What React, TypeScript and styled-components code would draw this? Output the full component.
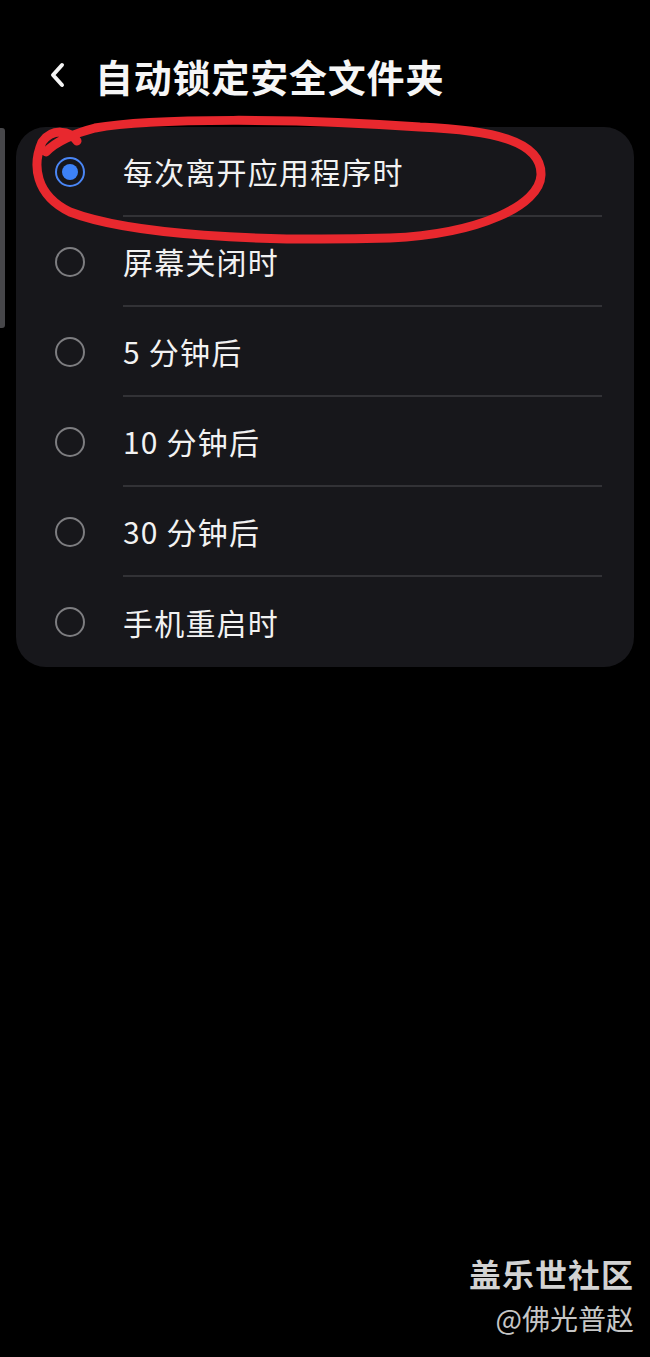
import React from 'react'
import styled, { createGlobalStyle } from 'styled-components'

const GlobalStyle = createGlobalStyle`
    html, body {
        margin: 0;
        padding: 0;
        background: #000;
    }
    body {
        font-family: 'Noto Sans CJK SC', 'Noto Sans', Roboto, sans-serif;
        color: #f4f4f4;
    }
`

const Page = styled.div`
    position: relative;
    width: 650px;
    min-height: 1357px;
    background: #000;
    overflow: hidden;
`

const Header = styled.div`
    display: flex;
    align-items: center;
    height: 54px;
    padding: 48px 0 0 44px;
    margin-bottom: 25px;
`

const BackButton = styled.button`
    background: transparent;
    border: none;
    padding: 0;
    width: 26px;
    height: 30px;
    display: flex;
    align-items: center;
    justify-content: center;
    margin-right: 25px;
`

const Title = styled.h1`
    margin: 0;
    font-size: 38px;
    font-weight: 600;
    letter-spacing: 0.8px;
    color: #f6f6f6;
`

const Card = styled.div`
    margin: 0 16px;
    background: #17171b;
    border-radius: 30px;
    overflow: hidden;
`

const Row = styled.div`
    display: flex;
    align-items: center;
    height: 90px;
    padding-left: 39px;
`

const Radio = styled.span<{ checked?: boolean }>`
    position: relative;
    flex: none;
    box-sizing: border-box;
    width: 30px;
    height: 30px;
    border-radius: 50%;
    border: 2px solid ${({ checked }) => (checked ? '#4a86f5' : '#7d7d80')};
    margin-right: 38px;

    &::after {
        content: '';
        display: ${({ checked }) => (checked ? 'block' : 'none')};
        position: absolute;
        inset: 5px;
        border-radius: 50%;
        background: #3d82f7;
    }
`

const Label = styled.div<{ last?: boolean }>`
    flex: 1;
    height: 100%;
    display: flex;
    align-items: center;
    margin-right: 32px;
    box-sizing: border-box;
    border-bottom: ${({ last }) => (last ? 'none' : '2px solid #323236')};
    font-size: 30px;
    letter-spacing: 1.2px;
    color: #f2f2f2;
`

const ScrollHint = styled.div`
    position: absolute;
    left: 0;
    top: 128px;
    width: 5px;
    height: 200px;
    background: #47474a;
    border-radius: 0 3px 3px 0;
`

const Scribble = styled.svg`
    position: absolute;
    left: 0;
    top: 0;
    pointer-events: none;
`

const Watermark = styled.div`
    position: absolute;
    right: 16px;
    top: 1250px;
    display: flex;
    flex-direction: column;
    align-items: flex-end;
    gap: 2px;
    color: #d2d2d2;
`

const WatermarkBrand = styled.div`
    font-size: 32px;
    font-weight: 700;
    letter-spacing: 1px;
`

const WatermarkUser = styled.div`
    font-size: 28px;
    color: #c6c6c6;
`

const options = [
    '每次离开应用程序时',
    '屏幕关闭时',
    '5 分钟后',
    '10 分钟后',
    '30 分钟后',
    '手机重启时',
]

export default function App() {
    const selected = 0
    return (
        <Page>
            <GlobalStyle />
            <Header>
                <BackButton aria-label="返回">
                    <svg width="18" height="28" viewBox="0 0 18 28">
                        <path
                            d="M14 4 L5 14 L14 24"
                            fill="none"
                            stroke="#f4f4f4"
                            strokeWidth="4"
                            strokeLinecap="round"
                            strokeLinejoin="round"
                        />
                    </svg>
                </BackButton>
                <Title>自动锁定安全文件夹</Title>
            </Header>
            <Card>
                {options.map((o, i) => (
                    <Row key={o}>
                        <Radio checked={i === selected} />
                        <Label last={i === options.length - 1}>{o}</Label>
                    </Row>
                ))}
            </Card>
            <ScrollHint />
            <Scribble width="650" height="300" viewBox="0 0 650 300">
                <path
                    d="M77 141 C70 130, 52 128, 42 142 C32 165, 35 195, 70 212 C130 235, 260 242, 390 238 C480 234, 540 205, 541 175 C542 140, 490 130, 420 127 C300 118, 150 118, 95 128 C75 133, 55 142, 46 152"
                    fill="none"
                    stroke="#e8282e"
                    strokeWidth="9"
                    strokeLinecap="round"
                    strokeLinejoin="round"
                />
            </Scribble>
            <Watermark>
                <WatermarkBrand>盖乐世社区</WatermarkBrand>
                <WatermarkUser>@佛光普赵</WatermarkUser>
            </Watermark>
        </Page>
    )
}
